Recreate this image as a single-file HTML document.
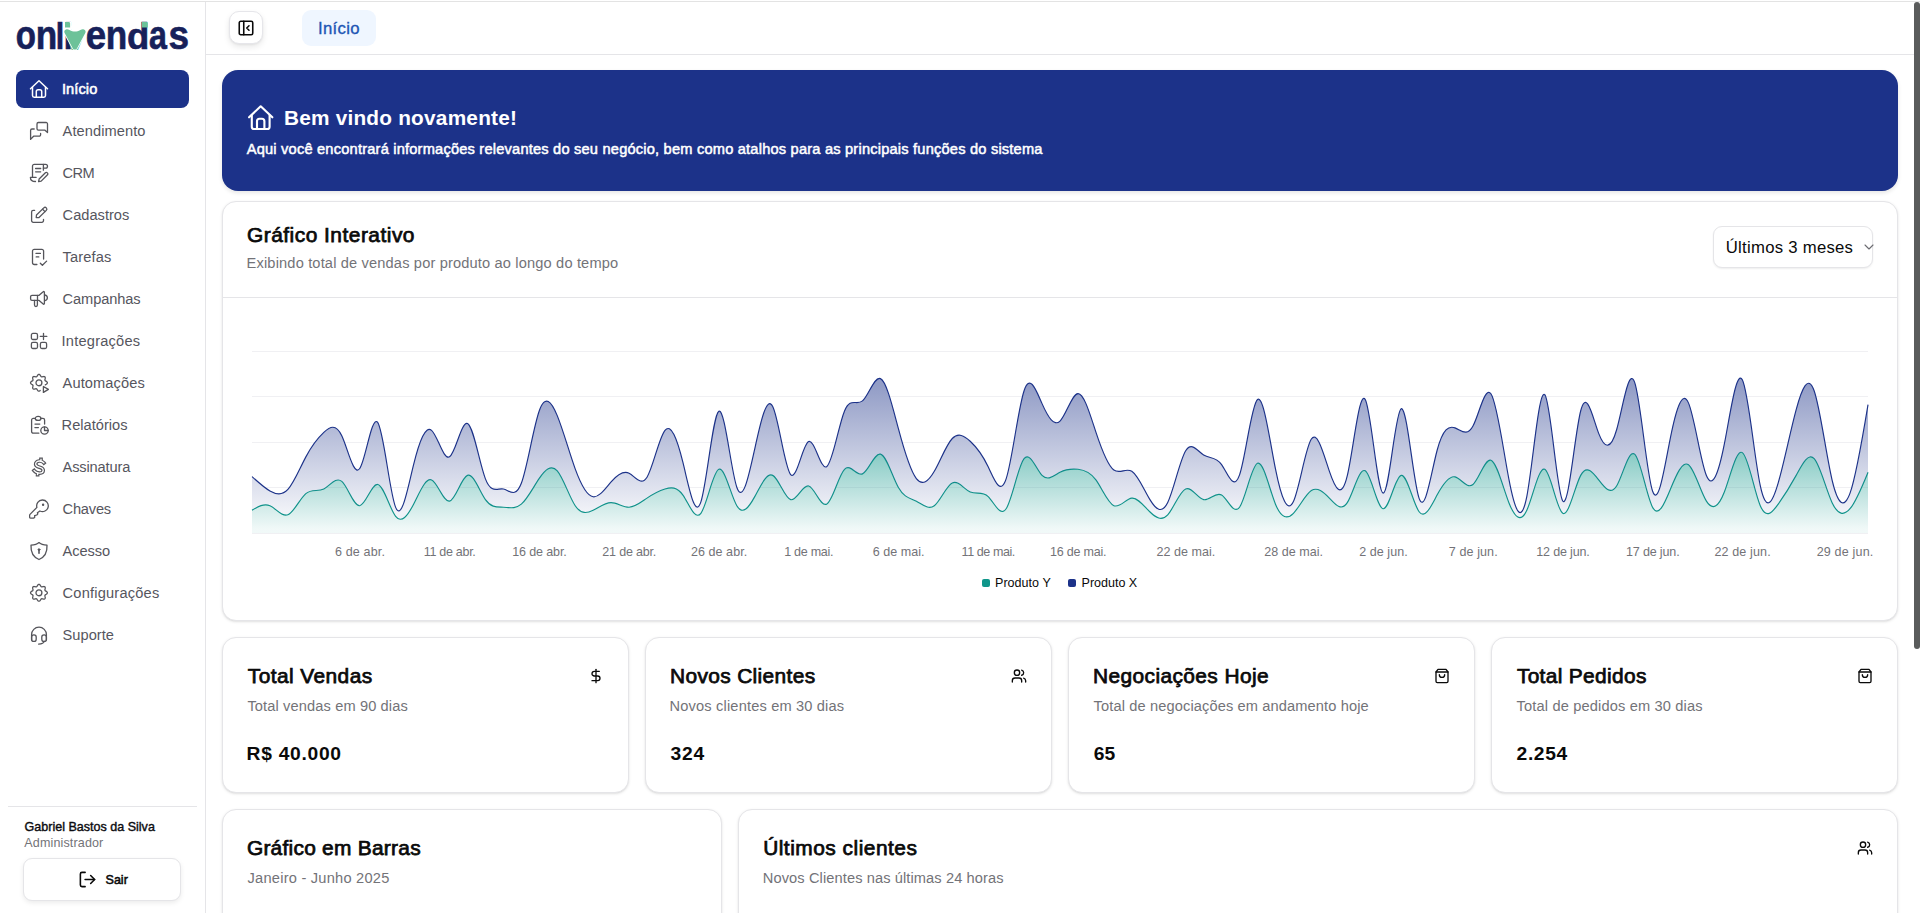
<!DOCTYPE html>
<html lang="pt-BR"><head><meta charset="utf-8"><title>Onlivendas - Início</title>
<style>
*{box-sizing:border-box;margin:0;padding:0}
html,body{width:1920px;height:913px;overflow:hidden;background:#fff}
body{font-family:"Liberation Sans", sans-serif;color:#0a0a0a;position:relative;-webkit-font-smoothing:antialiased}
.abs{position:absolute}
.t{position:absolute;white-space:nowrap;display:block}
.card{position:absolute;background:#fff;border:1px solid #e5e5e8;border-radius:14px;box-shadow:0 1px 3px rgba(0,0,0,.10),0 1px 2px -1px rgba(0,0,0,.10)}
svg{display:block}
</style></head>
<body>
<div class="abs" style="left:0;top:1px;width:1920px;height:1px;background:#e3e3e3"></div>
<div class="abs" style="left:205px;top:2px;width:1px;height:911px;background:#e5e5e8"></div>
<div class="abs" id="logo" style="left:0;top:13.0px;height:42.6px;width:205px;font-size:42.6px;line-height:42.6px;font-weight:700;white-space:nowrap" aria-label="onlivendas"><span style="display:inline-block;width:0;color:#17215a;-webkit-text-stroke:0.7px #17215a;transform-origin:0 36.0px;transform:translate(15.75px,0.46px) scale(0.7753,0.9620)">o</span><span style="display:inline-block;width:0;color:#17215a;-webkit-text-stroke:0.7px #17215a;transform-origin:0 36.0px;transform:translate(35.84px,0.27px) scale(0.8238,0.9451)">n</span><span style="display:inline-block;width:0;color:#17215a;-webkit-text-stroke:0.7px #17215a;transform-origin:0 36.0px;transform:translate(55.72px,0.30px) scale(0.7143,0.8675)">l</span><span style="display:inline-block;width:0;color:#17215a;-webkit-text-stroke:0.7px #17215a;transform-origin:0 36.0px;transform:translate(63.76px,0.30px) scale(0.7532,0.8675)">i</span><span style="display:inline-block;width:0;color:#6cc299;-webkit-text-stroke:0px #6cc299;transform-origin:0 36.0px;transform:translate(64.30px,0.80px) scale(0.8958,0.8261)">v</span><span style="display:inline-block;width:0;color:#17215a;-webkit-text-stroke:0.7px #17215a;transform-origin:0 36.0px;transform:translate(85.84px,0.46px) scale(0.8590,0.9620)">e</span><span style="display:inline-block;width:0;color:#17215a;-webkit-text-stroke:0.7px #17215a;transform-origin:0 36.0px;transform:translate(105.84px,0.27px) scale(0.8238,0.9451)">n</span><span style="display:inline-block;width:0;color:#17215a;-webkit-text-stroke:0.7px #17215a;transform-origin:0 36.0px;transform:translate(126.94px,0.49px) scale(0.8565,0.8738)">d</span><span style="display:inline-block;width:0;color:#17215a;-webkit-text-stroke:0.7px #17215a;transform-origin:0 36.0px;transform:translate(148.91px,0.46px) scale(0.7553,0.9620)">a</span><span style="display:inline-block;width:0;color:#17215a;-webkit-text-stroke:0.7px #17215a;transform-origin:0 36.0px;transform:translate(168.44px,0.46px) scale(0.8664,0.9620)">s</span></div><svg class="abs" style="left:0;top:0" width="205" height="64" viewBox="0 0 205 64">
<rect x="64.4" y="21.4" width="7" height="10.6" fill="#fff"/>
<path d="M65 22.1 H68.8 Q70.1 22.1 70.1 23.4 V27.5 H65 Z" fill="#6cc299"/>
<path d="M64.5 32.8 C63.9 31.4 64.6 29.9 66 29.4 C67.2 29 68.3 29.3 69.5 29.9 C71.5 30.9 73 31.4 74.9 31.4 C76.8 31.4 78.4 30.9 80.4 29.9 C81.6 29.3 82.7 29 83.9 29.4 C85.3 29.9 86 31.4 85.4 32.8 L77.2 47.9 C76.2 49.9 73.6 49.9 72.6 47.9 Z" fill="#6cc299" stroke="#fff" stroke-width="1.6" paint-order="stroke"/>
<path d="M141.9 22.1 H146.4 Q147.8 22.1 147.8 23.5 V27.4 H141.9 Z" fill="#6cc299"/>
</svg>
<div class="abs" style="left:16px;top:70px;width:173px;height:38px;border-radius:8px;background:#1c3289"></div>
<div class="abs" style="left:29px;top:79px;width:20px;height:20px;color:#fff"><svg width="20" height="20" viewBox="0 0 20 20" fill="none" stroke-linecap="round" stroke-linejoin="round" stroke="#fff" stroke-width="1.5"><path d="M1.5 9.7 L10 1.7 L18.5 9.7"/><path d="M3.5 8.2 V16.6 a1.7 1.7 0 0 0 1.7 1.7 H14.8 a1.7 1.7 0 0 0 1.7 -1.7 V8.2"/><path d="M7.3 18.2 V12.6 a1.8 1.8 0 0 1 1.8 -1.8 h1.8 a1.8 1.8 0 0 1 1.8 1.8 V18.2"/></svg></div>
<div class="abs" style="left:29px;top:121px;width:20px;height:20px;color:#55555b"><svg width="20" height="20" viewBox="0 0 20 20" fill="none" stroke-linecap="round" stroke-linejoin="round" stroke="#55555b" stroke-width="1.3"><path d="M9.4 1.5 H17.1 a1.4 1.4 0 0 1 1.4 1.4 V11.6 L15.7 9.1 H9.4 a1.4 1.4 0 0 1 -1.4 -1.4 V2.9 a1.4 1.4 0 0 1 1.4 -1.4 Z"/><path d="M5.2 8 H3 a1.4 1.4 0 0 0 -1.4 1.4 V18.4 L4.6 15.2 H10.2 a1.4 1.4 0 0 0 1.4 -1.4 V12.4"/></svg></div>
<div class="abs" style="left:29px;top:163px;width:20px;height:20px;color:#55555b"><svg width="20" height="20" viewBox="0 0 20 20" fill="none" stroke-linecap="round" stroke-linejoin="round" stroke="#55555b" stroke-width="1.3"><path d="M14.4 7.2 V1.4 H5.2 a1.7 1.7 0 0 0 -1.7 1.7 V14.4"/><path d="M14.4 1.4 H16.6 a1.9 1.9 0 0 1 0 3.8 H14.4"/><path d="M6.6 5.5 H11.7 M6.6 8.8 H11.7"/><path d="M7.1 14.4 H1.4 c0 2.6 1.9 4.1 5.1 4.1"/><path d="M9.6 18.6 l0.5 -2.6 l6.3 -6.3 a1.5 1.5 0 0 1 2.1 2.1 l-6.3 6.3 Z"/></svg></div>
<div class="abs" style="left:29px;top:205px;width:20px;height:20px;color:#55555b"><svg width="20" height="20" viewBox="0 0 20 20" fill="none" stroke-linecap="round" stroke-linejoin="round" stroke="#55555b" stroke-width="1.3"><path d="M5.6 5.4 H4.2 a1.6 1.6 0 0 0 -1.6 1.6 V15.7 a1.6 1.6 0 0 0 1.6 1.6 H12.9 a1.6 1.6 0 0 0 1.6 -1.6 V14.3"/><path d="M7.2 12.6 l0.3 -2.6 l7.3 -7.1 a1.75 1.75 0 0 1 2.5 2.5 l-7.3 7.1 Z"/><path d="M13.6 4.2 L16.0 6.6"/></svg></div>
<div class="abs" style="left:29px;top:247px;width:20px;height:20px;color:#55555b"><svg width="20" height="20" viewBox="0 0 20 20" fill="none" stroke-linecap="round" stroke-linejoin="round" stroke="#55555b" stroke-width="1.3"><path d="M7.9 17.5 H5.2 a1.7 1.7 0 0 1 -1.7 -1.7 V4.1 a1.7 1.7 0 0 1 1.7 -1.7 H12.9 a1.7 1.7 0 0 1 1.7 1.7 V12"/><path d="M7 6.4 H11.4 M7.2 9.95 H9.8"/><path d="M11.3 16.2 L13.4 18.3 L17.6 14.1"/></svg></div>
<div class="abs" style="left:29px;top:289px;width:20px;height:20px;color:#55555b"><svg width="20" height="20" viewBox="0 0 20 20" fill="none" stroke-linecap="round" stroke-linejoin="round" stroke="#55555b" stroke-width="1.3"><path d="M8.5 6.35 H3 a1.4 1.4 0 0 0 -1.4 1.4 V10 a1.4 1.4 0 0 0 1.4 1.4 H8.5 Z"/><path d="M8.5 6.35 H10.1 L14.2 2.7 a0.7 0.7 0 0 1 1.2 0.5 V14.6 a0.7 0.7 0 0 1 -1.2 0.5 L10.1 11.4 H8.5"/><path d="M5.5 11.4 V16.1 a1.45 1.45 0 0 0 2.9 0 V11.4"/><path d="M16 6 a2.9 2.9 0 0 1 0 5.7"/></svg></div>
<div class="abs" style="left:29px;top:331px;width:20px;height:20px;color:#55555b"><svg width="20" height="20" viewBox="0 0 20 20" fill="none" stroke-linecap="round" stroke-linejoin="round" stroke="#55555b" stroke-width="1.3"><rect x="2.4" y="2.4" width="6.1" height="6.1" rx="1.5"/><rect x="2.4" y="11.4" width="6.1" height="6.1" rx="1.5"/><rect x="11.4" y="11.4" width="6.2" height="6.1" rx="1.5"/><path d="M14.5 2.3 V8.6 M11.3 5.45 H17.8"/></svg></div>
<div class="abs" style="left:29px;top:373px;width:20px;height:20px;color:#55555b"><svg width="20" height="20" viewBox="0 0 20 20" fill="none" stroke-linecap="round" stroke-linejoin="round" stroke="#55555b" stroke-width="1.3"><path d="M11.16 17.45 L10.89 17.75 L10.59 17.99 L10.28 18.15 L9.95 18.20 L9.62 18.15 L9.31 17.99 L9.01 17.75 L8.74 17.45 L8.50 17.11 L8.28 16.76 L8.08 16.43 L7.89 16.15 L7.68 15.94 L7.46 15.81 L7.21 15.75 L6.92 15.75 L6.58 15.81 L6.21 15.90 L5.81 15.99 L5.40 16.06 L4.99 16.09 L4.61 16.05 L4.28 15.93 L4.01 15.74 L3.82 15.47 L3.70 15.14 L3.66 14.76 L3.69 14.35 L3.76 13.94 L3.85 13.54 L3.94 13.17 L4.00 12.83 L4.00 12.54 L3.94 12.29 L3.81 12.07 L3.60 11.86 L3.32 11.67 L2.99 11.47 L2.64 11.25 L2.30 11.01 L2.00 10.74 L1.76 10.44 L1.60 10.13 L1.55 9.80 L1.60 9.47 L1.76 9.16 L2.00 8.86 L2.30 8.59 L2.64 8.35 L2.99 8.13 L3.32 7.93 L3.60 7.74 L3.81 7.53 L3.94 7.31 L4.00 7.06 L4.00 6.77 L3.94 6.43 L3.85 6.06 L3.76 5.66 L3.69 5.25 L3.66 4.84 L3.70 4.46 L3.82 4.13 L4.01 3.86 L4.28 3.67 L4.61 3.55 L4.99 3.51 L5.40 3.54 L5.81 3.61 L6.21 3.70 L6.58 3.79 L6.92 3.85 L7.21 3.85 L7.46 3.79 L7.68 3.66 L7.89 3.45 L8.08 3.17 L8.28 2.84 L8.50 2.49 L8.74 2.15 L9.01 1.85 L9.31 1.61 L9.62 1.45 L9.95 1.40 L10.28 1.45 L10.59 1.61 L10.89 1.85 L11.16 2.15 L11.40 2.49 L11.62 2.84 L11.82 3.17 L12.01 3.45 L12.22 3.66 L12.44 3.79 L12.69 3.85 L12.98 3.85 L13.32 3.79 L13.69 3.70 L14.09 3.61 L14.50 3.54 L14.91 3.51 L15.29 3.55 L15.62 3.67 L15.89 3.86 L16.08 4.13 L16.20 4.46 L16.24 4.84 L16.21 5.25 L16.14 5.66 L16.05 6.06 L15.96 6.43 L15.90 6.77 L15.90 7.06 L15.96 7.31 L16.09 7.53 L16.30 7.74 L16.58 7.93 L16.91 8.13 L17.26 8.35 L17.60 8.59 L17.90 8.86 L18.14 9.16 L18.30 9.47 L18.35 9.80 L18.35 9.80 L18.30 10.13 L18.14 10.44 L17.90 10.74 L17.60 11.01 L17.26 11.25 L16.91 11.47 L16.58 11.67 L16.30 11.86"/><circle cx="9.95" cy="9.8" r="2.95"/><path d="M14.4 13.5 V19.4 L19.4 16.4 Z"/></svg></div>
<div class="abs" style="left:29px;top:415px;width:20px;height:20px;color:#55555b"><svg width="20" height="20" viewBox="0 0 20 20" fill="none" stroke-linecap="round" stroke-linejoin="round" stroke="#55555b" stroke-width="1.3"><path d="M9.8 18.2 H4.3 a1.7 1.7 0 0 1 -1.7 -1.7 V5.1 a1.7 1.7 0 0 1 1.7 -1.7 H6.3 M11.9 3.4 H13.9 a1.7 1.7 0 0 1 1.7 1.7 V9.1"/><ellipse cx="9.1" cy="3.4" rx="2.8" ry="2"/><path d="M6 9.1 H10.8 M5.9 12.6 H9.4"/><circle cx="15.5" cy="15.5" r="3.7"/><path d="M15.5 11.8 V15.5 H19.2"/></svg></div>
<div class="abs" style="left:29px;top:457px;width:20px;height:20px;color:#55555b"><svg width="20" height="20" viewBox="0 0 20 20" fill="none" stroke-linecap="round" stroke-linejoin="round" stroke="#55555b" stroke-width="1.3"><path d="M14.9 5.9 C13.6 4.3 11.8 3.9 10.2 4 C7.7 4.2 6.5 5.8 6.7 7.4 C7 9.3 9 9.8 10.5 10.2 C12.3 10.7 14.3 11.6 14.2 13.5 C14.1 15.3 12.4 16.2 10.3 16.1 C8.2 16 6.4 15.3 5.1 13.6 M12 4 V2.3 M8.6 16.2 V17.6" stroke-width="3.7" stroke-linecap="square"/><path d="M14.9 5.9 C13.6 4.3 11.8 3.9 10.2 4 C7.7 4.2 6.5 5.8 6.7 7.4 C7 9.3 9 9.8 10.5 10.2 C12.3 10.7 14.3 11.6 14.2 13.5 C14.1 15.3 12.4 16.2 10.3 16.1 C8.2 16 6.4 15.3 5.1 13.6 M12 4 V2.3 M8.6 16.2 V17.6" stroke="#fff" stroke-width="1.3" stroke-linecap="square"/></svg></div>
<div class="abs" style="left:29px;top:499px;width:20px;height:20px;color:#55555b"><svg width="20" height="20" viewBox="0 0 20 20" fill="none" stroke-linecap="round" stroke-linejoin="round" stroke="#55555b" stroke-width="1.3"><path d="M7.9 8.4 A5.8 5.8 0 1 1 10.9 12 L8.4 13.7 L8.8 14.9 L7.8 16 L5.6 16.7 L5.8 18 L4.8 19.2 H1.8 Q0.6 19.2 0.6 18 V16.4 Q0.6 15.8 1 15.4 Z"/><circle cx="14.1" cy="5.7" r="0.55" fill="currentColor"/></svg></div>
<div class="abs" style="left:29px;top:541px;width:20px;height:20px;color:#55555b"><svg width="20" height="20" viewBox="0 0 20 20" fill="none" stroke-linecap="round" stroke-linejoin="round" stroke="#55555b" stroke-width="1.3"><path d="M10 1.6 C11.5 3 14.5 4 18 4.2 C18.4 11.6 15.2 16.3 10 18.5 C4.8 16.3 1.6 11.6 2 4.2 C5.5 4 8.5 3 10 1.6 Z"/><circle cx="10" cy="8.6" r="0.9" fill="currentColor" stroke-width="1"/><path d="M10 9 V12.2" stroke-width="1.6"/></svg></div>
<div class="abs" style="left:29px;top:583px;width:20px;height:20px;color:#55555b"><svg width="20" height="20" viewBox="0 0 20 20" fill="none" stroke-linecap="round" stroke-linejoin="round" stroke="#55555b" stroke-width="1.3"><path d="M18.35 9.80 L18.30 10.13 L18.14 10.44 L17.90 10.74 L17.60 11.01 L17.26 11.25 L16.91 11.47 L16.58 11.67 L16.30 11.86 L16.09 12.07 L15.96 12.29 L15.90 12.54 L15.90 12.83 L15.96 13.17 L16.05 13.54 L16.14 13.94 L16.21 14.35 L16.24 14.76 L16.20 15.14 L16.08 15.47 L15.89 15.74 L15.62 15.93 L15.29 16.05 L14.91 16.09 L14.50 16.06 L14.09 15.99 L13.69 15.90 L13.32 15.81 L12.98 15.75 L12.69 15.75 L12.44 15.81 L12.22 15.94 L12.01 16.15 L11.82 16.43 L11.62 16.76 L11.40 17.11 L11.16 17.45 L10.89 17.75 L10.59 17.99 L10.28 18.15 L9.95 18.20 L9.62 18.15 L9.31 17.99 L9.01 17.75 L8.74 17.45 L8.50 17.11 L8.28 16.76 L8.08 16.43 L7.89 16.15 L7.68 15.94 L7.46 15.81 L7.21 15.75 L6.92 15.75 L6.58 15.81 L6.21 15.90 L5.81 15.99 L5.40 16.06 L4.99 16.09 L4.61 16.05 L4.28 15.93 L4.01 15.74 L3.82 15.47 L3.70 15.14 L3.66 14.76 L3.69 14.35 L3.76 13.94 L3.85 13.54 L3.94 13.17 L4.00 12.83 L4.00 12.54 L3.94 12.29 L3.81 12.07 L3.60 11.86 L3.32 11.67 L2.99 11.47 L2.64 11.25 L2.30 11.01 L2.00 10.74 L1.76 10.44 L1.60 10.13 L1.55 9.80 L1.60 9.47 L1.76 9.16 L2.00 8.86 L2.30 8.59 L2.64 8.35 L2.99 8.13 L3.32 7.93 L3.60 7.74 L3.81 7.53 L3.94 7.31 L4.00 7.06 L4.00 6.77 L3.94 6.43 L3.85 6.06 L3.76 5.66 L3.69 5.25 L3.66 4.84 L3.70 4.46 L3.82 4.13 L4.01 3.86 L4.28 3.67 L4.61 3.55 L4.99 3.51 L5.40 3.54 L5.81 3.61 L6.21 3.70 L6.58 3.79 L6.92 3.85 L7.21 3.85 L7.46 3.79 L7.68 3.66 L7.89 3.45 L8.08 3.17 L8.28 2.84 L8.50 2.49 L8.74 2.15 L9.01 1.85 L9.31 1.61 L9.62 1.45 L9.95 1.40 L10.28 1.45 L10.59 1.61 L10.89 1.85 L11.16 2.15 L11.40 2.49 L11.62 2.84 L11.82 3.17 L12.01 3.45 L12.22 3.66 L12.44 3.79 L12.69 3.85 L12.98 3.85 L13.32 3.79 L13.69 3.70 L14.09 3.61 L14.50 3.54 L14.91 3.51 L15.29 3.55 L15.62 3.67 L15.89 3.86 L16.08 4.13 L16.20 4.46 L16.24 4.84 L16.21 5.25 L16.14 5.66 L16.05 6.06 L15.96 6.43 L15.90 6.77 L15.90 7.06 L15.96 7.31 L16.09 7.53 L16.30 7.74 L16.58 7.93 L16.91 8.13 L17.26 8.35 L17.60 8.59 L17.90 8.86 L18.14 9.16 L18.30 9.47 L18.35 9.80Z"/><circle cx="9.95" cy="9.8" r="2.95"/></svg></div>
<div class="abs" style="left:29px;top:625px;width:20px;height:20px;color:#55555b"><svg width="20" height="20" viewBox="0 0 20 20" fill="none" stroke-linecap="round" stroke-linejoin="round" stroke="#55555b" stroke-width="1.3"><path d="M2.6 15 V9.6 a7.4 7.4 0 0 1 14.8 0 V15"/><rect x="2.6" y="9.8" width="4.6" height="6.6" rx="2.2"/><rect x="12.8" y="9.8" width="4.6" height="6.6" rx="2.2"/><path d="M15.3 16.4 C14.8 18 12.8 19 9.6 19.1"/></svg></div>
<div class="abs" style="left:8px;top:806px;width:189px;height:1px;background:#e5e5e8"></div>
<div class="abs" style="left:23px;top:858px;width:158px;height:43px;border:1px solid #e5e5e8;border-radius:9px;background:#fff;box-shadow:0 2px 5px rgba(0,0,0,.08)"></div>
<svg class="abs" style="left:77.5px;top:870.3px" width="19" height="19" viewBox="0 0 24 24" fill="none" stroke="#0a0a0a" stroke-width="2" stroke-linecap="round" stroke-linejoin="round"><path d="M9 21H5a2 2 0 0 1-2-2V5a2 2 0 0 1 2-2h4"/><polyline points="16 17 21 12 16 7"/><line x1="21" x2="9" y1="12" y2="12"/></svg>
<div class="abs" style="left:206px;top:54px;width:1708px;height:1px;background:#e5e5e8"></div>
<div class="abs" style="left:229px;top:11px;width:34px;height:33px;border:1px solid #e6e6ea;border-radius:10px;background:#fff;box-shadow:0 3px 6px rgba(0,0,0,.09),0 1px 2px rgba(0,0,0,.05)"></div>
<svg class="abs" style="left:237px;top:18.8px" width="18" height="18" viewBox="0 0 24 24" fill="none" stroke="#0a0a0a" stroke-width="2.1" stroke-linecap="round" stroke-linejoin="round"><rect width="18" height="18" x="3" y="3" rx="2"/><path d="M9 3v18"/><path d="m16 15-3-3 3-3"/></svg>
<div class="abs" style="left:302px;top:10px;width:74px;height:36px;border-radius:9px;background:#eff6ff"></div>
<div class="abs" style="left:222px;top:70px;width:1676px;height:121px;border-radius:16px;background:#1c3289;box-shadow:0 2px 4px rgba(0,0,0,.10)"></div>
<div class="abs" style="left:247.3px;top:104px;width:27.4px;height:27.4px"><svg width="27.4" height="27.4" viewBox="0 0 20 20" fill="none" stroke-linecap="round" stroke-linejoin="round" stroke="#fff" stroke-width="1.55"><path d="M1.5 9.7 L10 1.7 L18.5 9.7"/><path d="M3.5 8.2 V16.6 a1.7 1.7 0 0 0 1.7 1.7 H14.8 a1.7 1.7 0 0 0 1.7 -1.7 V8.2"/><path d="M7.3 18.2 V12.6 a1.8 1.8 0 0 1 1.8 -1.8 h1.8 a1.8 1.8 0 0 1 1.8 1.8 V18.2"/></svg></div>
<div class="card" style="left:222px;top:201px;width:1676px;height:420px"></div>
<div class="abs" style="left:223px;top:297px;width:1674px;height:1px;background:#e5e5e8"></div>
<div class="abs" style="left:1713px;top:226px;width:160px;height:42px;border:1px solid #e5e5e8;border-radius:9px;background:#fff;box-shadow:0 1px 2px rgba(0,0,0,.07)"></div>
<svg class="abs" style="left:1861px;top:239px" width="16" height="16" viewBox="0 0 24 24" fill="none" stroke="#6b6b70" stroke-width="1.6" stroke-linecap="round" stroke-linejoin="round"><path d="m6 9 6 6 6-6"/></svg>
<svg class="abs" style="left:0;top:0" width="1920" height="913" viewBox="0 0 1920 913">
<defs>
<linearGradient id="gx" x1="0" y1="0" x2="0" y2="1"><stop offset="5%" stop-color="#1c3289" stop-opacity="0.8"/><stop offset="95%" stop-color="#1c3289" stop-opacity="0.1"/></linearGradient>
<linearGradient id="gy" x1="0" y1="0" x2="0" y2="1"><stop offset="5%" stop-color="#0f968a" stop-opacity="0.8"/><stop offset="95%" stop-color="#0f968a" stop-opacity="0.1"/></linearGradient>
</defs>
<g shape-rendering="crispEdges"><line x1="252" x2="1868" y1="351.0" y2="351.0" stroke="#f0f0f3" stroke-width="1"/><line x1="252" x2="1868" y1="396.5" y2="396.5" stroke="#f0f0f3" stroke-width="1"/><line x1="252" x2="1868" y1="442.0" y2="442.0" stroke="#f0f0f3" stroke-width="1"/><line x1="252" x2="1868" y1="487.5" y2="487.5" stroke="#f0f0f3" stroke-width="1"/><line x1="252" x2="1868" y1="533.0" y2="533.0" stroke="#f0f0f3" stroke-width="1"/></g>
<path d="M252.00,476.58C257.99,482.03,263.97,487.48,269.96,490.99C275.94,494.50,281.93,496.08,287.91,489.47C293.90,482.86,299.88,468.07,305.87,456.86C311.85,445.66,317.84,438.05,323.82,432.44C329.81,426.84,335.79,423.22,341.78,435.78C347.76,448.34,353.75,477.07,359.73,468.54C365.72,460.01,371.70,414.23,377.69,422.44C383.67,430.64,389.66,492.84,395.64,507.37C401.63,521.89,407.61,488.74,413.60,464.60C419.59,440.46,425.57,425.32,431.56,430.32C437.54,435.32,443.53,460.45,449.51,456.86C455.50,453.27,461.48,420.97,467.47,423.50C473.45,426.03,479.44,463.40,485.42,478.86C491.41,494.31,497.39,487.86,503.38,489.02C509.36,490.18,515.35,498.95,521.33,483.25C527.32,467.56,533.30,427.39,539.29,410.76C545.27,394.13,551.26,401.04,557.24,415.61C563.23,430.18,569.21,452.42,575.20,468.85C581.19,485.27,587.17,495.89,593.16,496.75C599.14,497.61,605.13,488.72,611.11,481.89C617.10,475.06,623.08,470.30,629.07,473.24C635.05,476.18,641.04,486.82,647.02,477.19C653.01,467.55,658.99,437.65,664.98,430.32C670.96,422.99,676.95,438.24,682.93,462.48C688.92,486.71,694.90,519.92,700.89,501.91C706.87,483.90,712.86,414.66,718.84,411.21C724.83,407.76,730.81,470.09,736.80,487.20C742.79,504.30,748.77,476.19,754.76,448.82C760.74,421.46,766.73,394.86,772.71,406.51C778.70,418.16,784.68,468.07,790.67,474.61C796.65,481.14,802.64,444.30,808.62,441.55C814.61,438.79,820.59,470.11,826.58,466.72C832.56,463.33,838.55,425.23,844.53,410.91C850.52,396.59,856.50,406.05,862.49,400.90C868.47,395.75,874.46,375.98,880.44,378.60C886.43,381.22,892.41,406.23,898.40,428.65C904.39,451.08,910.37,470.92,916.36,478.55C922.34,486.19,928.33,481.62,934.31,471.27C940.30,460.93,946.28,444.81,952.27,438.51C958.25,432.21,964.24,435.72,970.22,441.24C976.21,446.76,982.19,454.28,988.18,466.72C994.16,479.16,1000.15,496.52,1006.13,478.86C1012.12,461.19,1018.10,408.49,1024.09,390.74C1030.07,372.98,1036.06,390.16,1042.04,403.63C1048.03,417.10,1054.01,426.86,1060.00,421.07C1065.99,415.28,1071.97,393.93,1077.96,393.62C1083.94,393.31,1089.93,414.03,1095.91,432.14C1101.90,450.25,1107.88,465.74,1113.87,470.06C1119.85,474.37,1125.84,467.51,1131.82,471.27C1137.81,475.03,1143.79,489.42,1149.78,499.33C1155.76,509.24,1161.75,514.68,1167.73,502.51C1173.72,490.35,1179.70,460.58,1185.69,450.80C1191.67,441.02,1197.66,451.22,1203.64,455.04C1209.63,458.86,1215.61,456.29,1221.60,464.60C1227.59,472.90,1233.57,492.08,1239.56,474.91C1245.54,457.74,1251.53,404.21,1257.51,399.53C1263.50,394.85,1269.48,439.01,1275.47,468.85C1281.45,498.68,1287.44,514.18,1293.42,501.45C1299.41,488.73,1305.39,447.77,1311.38,438.97C1317.36,430.16,1323.35,453.51,1329.33,471.12C1335.32,488.73,1341.30,500.59,1347.29,475.67C1353.27,450.75,1359.26,389.05,1365.24,399.53C1371.23,410.01,1377.21,492.68,1383.20,493.11C1389.19,493.55,1395.17,411.76,1401.16,408.78C1407.14,405.81,1413.13,481.65,1419.11,498.42C1425.10,515.19,1431.08,472.89,1437.07,450.49C1443.05,428.10,1449.04,425.61,1455.02,427.89C1461.01,430.18,1466.99,437.24,1472.98,426.07C1478.96,414.91,1484.95,385.51,1490.93,393.77C1496.92,402.03,1502.90,447.93,1508.89,479.16C1514.87,510.38,1520.86,526.93,1526.84,496.30C1532.83,465.66,1538.81,387.85,1544.80,394.68C1550.79,401.51,1556.77,492.98,1562.76,501.00C1568.74,509.02,1574.73,433.58,1580.71,410.76C1586.70,387.93,1592.68,417.71,1598.67,433.36C1604.65,449.00,1610.64,450.50,1616.62,429.72C1622.61,408.93,1628.59,365.87,1634.58,382.09C1640.56,398.32,1646.55,473.83,1652.53,490.99C1658.52,508.15,1664.50,466.95,1670.49,437.30C1676.47,407.64,1682.46,389.53,1688.44,402.87C1694.43,416.21,1700.41,461.00,1706.40,475.52C1712.39,490.03,1718.37,474.27,1724.36,443.97C1730.34,413.68,1736.33,368.85,1742.31,379.82C1748.30,390.78,1754.28,457.54,1760.27,485.68C1766.25,513.82,1772.24,503.35,1778.22,482.80C1784.21,462.25,1790.19,431.62,1796.18,409.54C1802.16,387.47,1808.15,373.95,1814.13,390.74C1820.12,407.53,1826.10,454.63,1832.09,480.07C1838.07,505.51,1844.06,509.29,1850.04,493.11C1856.03,476.94,1862.01,440.81,1868.00,404.69L1868.00,472.33C1862.01,486.99,1856.03,501.64,1850.04,508.73C1844.06,515.83,1838.07,515.36,1832.09,502.67C1826.10,489.97,1820.12,465.05,1814.13,458.68C1808.15,452.31,1802.16,464.49,1796.18,475.37C1790.19,486.24,1784.21,495.81,1778.22,504.18C1772.24,512.56,1766.25,519.74,1760.27,505.70C1754.28,491.66,1748.30,456.39,1742.31,452.62C1736.33,448.84,1730.34,476.56,1724.36,492.05C1718.37,507.54,1712.39,510.79,1706.40,501.15C1700.41,491.51,1694.43,468.99,1688.44,464.75C1682.46,460.51,1676.47,474.57,1670.49,489.02C1664.50,503.47,1658.52,518.31,1652.53,507.22C1646.55,496.12,1640.56,459.08,1634.58,454.13C1628.59,449.19,1622.61,476.33,1616.62,485.98C1610.64,495.63,1604.65,487.78,1598.67,479.92C1592.68,472.05,1586.70,464.17,1580.71,475.37C1574.73,486.56,1568.74,516.82,1562.76,513.28C1556.77,509.75,1550.79,472.41,1544.80,469.30C1538.81,466.19,1532.83,497.32,1526.84,510.25C1520.86,523.18,1514.87,517.91,1508.89,502.67C1502.90,487.42,1496.92,462.19,1490.93,460.20C1484.95,458.21,1478.96,479.46,1472.98,484.47C1466.99,489.48,1461.01,478.25,1455.02,476.88C1449.04,475.52,1443.05,484.01,1437.07,495.08C1431.08,506.16,1425.10,519.81,1419.11,511.77C1413.13,503.72,1407.14,473.97,1401.16,475.37C1395.17,476.76,1389.19,509.29,1383.20,508.73C1377.21,508.18,1371.23,474.53,1365.24,470.82C1359.26,467.11,1353.27,493.33,1347.29,502.67C1341.30,512.00,1335.32,504.45,1329.33,498.12C1323.35,491.79,1317.36,486.69,1311.38,490.53C1305.39,494.38,1299.41,507.18,1293.42,513.28C1287.44,519.39,1281.45,518.81,1275.47,504.18C1269.48,489.56,1263.50,460.89,1257.51,463.23C1251.53,465.57,1245.54,498.92,1239.56,507.22C1233.57,515.51,1227.59,498.75,1221.60,495.08C1215.61,491.42,1209.63,500.85,1203.64,499.63C1197.66,498.42,1191.67,486.56,1185.69,489.02C1179.70,491.47,1173.72,508.23,1167.73,514.80C1161.75,521.37,1155.76,517.74,1149.78,511.77C1143.79,505.80,1137.81,497.48,1131.82,498.12C1125.84,498.75,1119.85,508.34,1113.87,505.70C1107.88,503.06,1101.90,488.20,1095.91,479.92C1089.93,471.63,1083.94,469.93,1077.96,469.30C1071.97,468.67,1065.99,469.13,1060.00,472.33C1054.01,475.54,1048.03,481.48,1042.04,475.37C1036.06,469.25,1030.07,451.06,1024.09,458.68C1018.10,466.30,1012.12,499.72,1006.13,508.73C1000.15,517.74,994.16,502.35,988.18,496.60C982.19,490.85,976.21,494.76,970.22,492.05C964.24,489.34,958.25,480.00,952.27,482.95C946.28,485.90,940.30,501.13,934.31,505.70C928.33,510.27,922.34,504.18,916.36,501.15C910.37,498.12,904.39,498.15,898.40,487.50C892.41,476.85,886.43,455.53,880.44,454.13C874.46,452.73,868.47,471.25,862.49,473.85C856.50,476.45,850.52,463.12,844.53,469.30C838.55,475.48,832.56,501.18,826.58,504.18C820.59,507.19,814.61,487.50,808.62,485.98C802.64,484.47,796.65,501.13,790.67,499.63C784.68,498.13,778.70,478.48,772.71,475.37C766.73,472.26,760.74,485.70,754.76,496.60C748.77,507.50,742.79,515.86,736.80,505.70C730.81,495.54,724.83,466.86,718.84,469.30C712.86,471.74,706.87,505.32,700.89,513.28C694.90,521.25,688.92,503.61,682.93,495.08C676.95,486.56,670.96,487.14,664.98,489.02C658.99,490.90,653.01,494.07,647.02,498.12C641.04,502.16,635.05,507.09,629.07,507.22C623.08,507.35,617.10,502.69,611.11,502.67C605.13,502.64,599.14,507.26,593.16,510.25C587.17,513.24,581.19,514.61,575.20,505.70C569.21,496.79,563.23,477.61,557.24,470.82C551.26,464.03,545.27,469.63,539.29,478.40C533.30,487.17,527.32,499.10,521.33,504.18C515.35,509.27,509.36,507.52,503.38,507.22C497.39,506.92,491.41,508.07,485.42,499.63C479.44,491.20,473.45,473.18,467.47,475.37C461.48,477.55,455.50,499.95,449.51,501.15C443.53,502.35,437.54,482.36,431.56,479.92C425.57,477.47,419.59,492.57,413.60,504.18C407.61,515.79,401.63,523.91,395.64,516.32C389.66,508.72,383.67,485.41,377.69,484.47C371.70,483.52,365.72,504.94,359.73,505.70C353.75,506.46,347.76,486.55,341.78,481.43C335.79,476.31,329.81,485.97,323.82,489.02C317.84,492.06,311.85,488.49,305.87,493.57C299.88,498.65,293.90,512.38,287.91,514.80C281.93,517.22,275.94,508.34,269.96,505.70C263.97,503.06,257.99,506.65,252.00,510.25Z" fill="#fff"/>
<path d="M252.00,510.25C257.99,506.65,263.97,503.06,269.96,505.70C275.94,508.34,281.93,517.22,287.91,514.80C293.90,512.38,299.88,498.65,305.87,493.57C311.85,488.49,317.84,492.06,323.82,489.02C329.81,485.97,335.79,476.31,341.78,481.43C347.76,486.55,353.75,506.46,359.73,505.70C365.72,504.94,371.70,483.52,377.69,484.47C383.67,485.41,389.66,508.72,395.64,516.32C401.63,523.91,407.61,515.79,413.60,504.18C419.59,492.57,425.57,477.47,431.56,479.92C437.54,482.36,443.53,502.35,449.51,501.15C455.50,499.95,461.48,477.55,467.47,475.37C473.45,473.18,479.44,491.20,485.42,499.63C491.41,508.07,497.39,506.92,503.38,507.22C509.36,507.52,515.35,509.27,521.33,504.18C527.32,499.10,533.30,487.17,539.29,478.40C545.27,469.63,551.26,464.03,557.24,470.82C563.23,477.61,569.21,496.79,575.20,505.70C581.19,514.61,587.17,513.24,593.16,510.25C599.14,507.26,605.13,502.64,611.11,502.67C617.10,502.69,623.08,507.35,629.07,507.22C635.05,507.09,641.04,502.16,647.02,498.12C653.01,494.07,658.99,490.90,664.98,489.02C670.96,487.14,676.95,486.56,682.93,495.08C688.92,503.61,694.90,521.25,700.89,513.28C706.87,505.32,712.86,471.74,718.84,469.30C724.83,466.86,730.81,495.54,736.80,505.70C742.79,515.86,748.77,507.50,754.76,496.60C760.74,485.70,766.73,472.26,772.71,475.37C778.70,478.48,784.68,498.13,790.67,499.63C796.65,501.13,802.64,484.47,808.62,485.98C814.61,487.50,820.59,507.19,826.58,504.18C832.56,501.18,838.55,475.48,844.53,469.30C850.52,463.12,856.50,476.45,862.49,473.85C868.47,471.25,874.46,452.73,880.44,454.13C886.43,455.53,892.41,476.85,898.40,487.50C904.39,498.15,910.37,498.12,916.36,501.15C922.34,504.18,928.33,510.27,934.31,505.70C940.30,501.13,946.28,485.90,952.27,482.95C958.25,480.00,964.24,489.34,970.22,492.05C976.21,494.76,982.19,490.85,988.18,496.60C994.16,502.35,1000.15,517.74,1006.13,508.73C1012.12,499.72,1018.10,466.30,1024.09,458.68C1030.07,451.06,1036.06,469.25,1042.04,475.37C1048.03,481.48,1054.01,475.54,1060.00,472.33C1065.99,469.13,1071.97,468.67,1077.96,469.30C1083.94,469.93,1089.93,471.63,1095.91,479.92C1101.90,488.20,1107.88,503.06,1113.87,505.70C1119.85,508.34,1125.84,498.75,1131.82,498.12C1137.81,497.48,1143.79,505.80,1149.78,511.77C1155.76,517.74,1161.75,521.37,1167.73,514.80C1173.72,508.23,1179.70,491.47,1185.69,489.02C1191.67,486.56,1197.66,498.42,1203.64,499.63C1209.63,500.85,1215.61,491.42,1221.60,495.08C1227.59,498.75,1233.57,515.51,1239.56,507.22C1245.54,498.92,1251.53,465.57,1257.51,463.23C1263.50,460.89,1269.48,489.56,1275.47,504.18C1281.45,518.81,1287.44,519.39,1293.42,513.28C1299.41,507.18,1305.39,494.38,1311.38,490.53C1317.36,486.69,1323.35,491.79,1329.33,498.12C1335.32,504.45,1341.30,512.00,1347.29,502.67C1353.27,493.33,1359.26,467.11,1365.24,470.82C1371.23,474.53,1377.21,508.18,1383.20,508.73C1389.19,509.29,1395.17,476.76,1401.16,475.37C1407.14,473.97,1413.13,503.72,1419.11,511.77C1425.10,519.81,1431.08,506.16,1437.07,495.08C1443.05,484.01,1449.04,475.52,1455.02,476.88C1461.01,478.25,1466.99,489.48,1472.98,484.47C1478.96,479.46,1484.95,458.21,1490.93,460.20C1496.92,462.19,1502.90,487.42,1508.89,502.67C1514.87,517.91,1520.86,523.18,1526.84,510.25C1532.83,497.32,1538.81,466.19,1544.80,469.30C1550.79,472.41,1556.77,509.75,1562.76,513.28C1568.74,516.82,1574.73,486.56,1580.71,475.37C1586.70,464.17,1592.68,472.05,1598.67,479.92C1604.65,487.78,1610.64,495.63,1616.62,485.98C1622.61,476.33,1628.59,449.19,1634.58,454.13C1640.56,459.08,1646.55,496.12,1652.53,507.22C1658.52,518.31,1664.50,503.47,1670.49,489.02C1676.47,474.57,1682.46,460.51,1688.44,464.75C1694.43,468.99,1700.41,491.51,1706.40,501.15C1712.39,510.79,1718.37,507.54,1724.36,492.05C1730.34,476.56,1736.33,448.84,1742.31,452.62C1748.30,456.39,1754.28,491.66,1760.27,505.70C1766.25,519.74,1772.24,512.56,1778.22,504.18C1784.21,495.81,1790.19,486.24,1796.18,475.37C1802.16,464.49,1808.15,452.31,1814.13,458.68C1820.12,465.05,1826.10,489.97,1832.09,502.67C1838.07,515.36,1844.06,515.83,1850.04,508.73C1856.03,501.64,1862.01,486.99,1868.00,472.33L1868.00,533.00L252.00,533.00Z" fill="url(#gy)" fill-opacity="0.6"/>
<path d="M252.00,510.25C257.99,506.65,263.97,503.06,269.96,505.70C275.94,508.34,281.93,517.22,287.91,514.80C293.90,512.38,299.88,498.65,305.87,493.57C311.85,488.49,317.84,492.06,323.82,489.02C329.81,485.97,335.79,476.31,341.78,481.43C347.76,486.55,353.75,506.46,359.73,505.70C365.72,504.94,371.70,483.52,377.69,484.47C383.67,485.41,389.66,508.72,395.64,516.32C401.63,523.91,407.61,515.79,413.60,504.18C419.59,492.57,425.57,477.47,431.56,479.92C437.54,482.36,443.53,502.35,449.51,501.15C455.50,499.95,461.48,477.55,467.47,475.37C473.45,473.18,479.44,491.20,485.42,499.63C491.41,508.07,497.39,506.92,503.38,507.22C509.36,507.52,515.35,509.27,521.33,504.18C527.32,499.10,533.30,487.17,539.29,478.40C545.27,469.63,551.26,464.03,557.24,470.82C563.23,477.61,569.21,496.79,575.20,505.70C581.19,514.61,587.17,513.24,593.16,510.25C599.14,507.26,605.13,502.64,611.11,502.67C617.10,502.69,623.08,507.35,629.07,507.22C635.05,507.09,641.04,502.16,647.02,498.12C653.01,494.07,658.99,490.90,664.98,489.02C670.96,487.14,676.95,486.56,682.93,495.08C688.92,503.61,694.90,521.25,700.89,513.28C706.87,505.32,712.86,471.74,718.84,469.30C724.83,466.86,730.81,495.54,736.80,505.70C742.79,515.86,748.77,507.50,754.76,496.60C760.74,485.70,766.73,472.26,772.71,475.37C778.70,478.48,784.68,498.13,790.67,499.63C796.65,501.13,802.64,484.47,808.62,485.98C814.61,487.50,820.59,507.19,826.58,504.18C832.56,501.18,838.55,475.48,844.53,469.30C850.52,463.12,856.50,476.45,862.49,473.85C868.47,471.25,874.46,452.73,880.44,454.13C886.43,455.53,892.41,476.85,898.40,487.50C904.39,498.15,910.37,498.12,916.36,501.15C922.34,504.18,928.33,510.27,934.31,505.70C940.30,501.13,946.28,485.90,952.27,482.95C958.25,480.00,964.24,489.34,970.22,492.05C976.21,494.76,982.19,490.85,988.18,496.60C994.16,502.35,1000.15,517.74,1006.13,508.73C1012.12,499.72,1018.10,466.30,1024.09,458.68C1030.07,451.06,1036.06,469.25,1042.04,475.37C1048.03,481.48,1054.01,475.54,1060.00,472.33C1065.99,469.13,1071.97,468.67,1077.96,469.30C1083.94,469.93,1089.93,471.63,1095.91,479.92C1101.90,488.20,1107.88,503.06,1113.87,505.70C1119.85,508.34,1125.84,498.75,1131.82,498.12C1137.81,497.48,1143.79,505.80,1149.78,511.77C1155.76,517.74,1161.75,521.37,1167.73,514.80C1173.72,508.23,1179.70,491.47,1185.69,489.02C1191.67,486.56,1197.66,498.42,1203.64,499.63C1209.63,500.85,1215.61,491.42,1221.60,495.08C1227.59,498.75,1233.57,515.51,1239.56,507.22C1245.54,498.92,1251.53,465.57,1257.51,463.23C1263.50,460.89,1269.48,489.56,1275.47,504.18C1281.45,518.81,1287.44,519.39,1293.42,513.28C1299.41,507.18,1305.39,494.38,1311.38,490.53C1317.36,486.69,1323.35,491.79,1329.33,498.12C1335.32,504.45,1341.30,512.00,1347.29,502.67C1353.27,493.33,1359.26,467.11,1365.24,470.82C1371.23,474.53,1377.21,508.18,1383.20,508.73C1389.19,509.29,1395.17,476.76,1401.16,475.37C1407.14,473.97,1413.13,503.72,1419.11,511.77C1425.10,519.81,1431.08,506.16,1437.07,495.08C1443.05,484.01,1449.04,475.52,1455.02,476.88C1461.01,478.25,1466.99,489.48,1472.98,484.47C1478.96,479.46,1484.95,458.21,1490.93,460.20C1496.92,462.19,1502.90,487.42,1508.89,502.67C1514.87,517.91,1520.86,523.18,1526.84,510.25C1532.83,497.32,1538.81,466.19,1544.80,469.30C1550.79,472.41,1556.77,509.75,1562.76,513.28C1568.74,516.82,1574.73,486.56,1580.71,475.37C1586.70,464.17,1592.68,472.05,1598.67,479.92C1604.65,487.78,1610.64,495.63,1616.62,485.98C1622.61,476.33,1628.59,449.19,1634.58,454.13C1640.56,459.08,1646.55,496.12,1652.53,507.22C1658.52,518.31,1664.50,503.47,1670.49,489.02C1676.47,474.57,1682.46,460.51,1688.44,464.75C1694.43,468.99,1700.41,491.51,1706.40,501.15C1712.39,510.79,1718.37,507.54,1724.36,492.05C1730.34,476.56,1736.33,448.84,1742.31,452.62C1748.30,456.39,1754.28,491.66,1760.27,505.70C1766.25,519.74,1772.24,512.56,1778.22,504.18C1784.21,495.81,1790.19,486.24,1796.18,475.37C1802.16,464.49,1808.15,452.31,1814.13,458.68C1820.12,465.05,1826.10,489.97,1832.09,502.67C1838.07,515.36,1844.06,515.83,1850.04,508.73C1856.03,501.64,1862.01,486.99,1868.00,472.33" fill="none" stroke="#0f968a" stroke-width="1.15"/>
<path d="M252.00,476.58C257.99,482.03,263.97,487.48,269.96,490.99C275.94,494.50,281.93,496.08,287.91,489.47C293.90,482.86,299.88,468.07,305.87,456.86C311.85,445.66,317.84,438.05,323.82,432.44C329.81,426.84,335.79,423.22,341.78,435.78C347.76,448.34,353.75,477.07,359.73,468.54C365.72,460.01,371.70,414.23,377.69,422.44C383.67,430.64,389.66,492.84,395.64,507.37C401.63,521.89,407.61,488.74,413.60,464.60C419.59,440.46,425.57,425.32,431.56,430.32C437.54,435.32,443.53,460.45,449.51,456.86C455.50,453.27,461.48,420.97,467.47,423.50C473.45,426.03,479.44,463.40,485.42,478.86C491.41,494.31,497.39,487.86,503.38,489.02C509.36,490.18,515.35,498.95,521.33,483.25C527.32,467.56,533.30,427.39,539.29,410.76C545.27,394.13,551.26,401.04,557.24,415.61C563.23,430.18,569.21,452.42,575.20,468.85C581.19,485.27,587.17,495.89,593.16,496.75C599.14,497.61,605.13,488.72,611.11,481.89C617.10,475.06,623.08,470.30,629.07,473.24C635.05,476.18,641.04,486.82,647.02,477.19C653.01,467.55,658.99,437.65,664.98,430.32C670.96,422.99,676.95,438.24,682.93,462.48C688.92,486.71,694.90,519.92,700.89,501.91C706.87,483.90,712.86,414.66,718.84,411.21C724.83,407.76,730.81,470.09,736.80,487.20C742.79,504.30,748.77,476.19,754.76,448.82C760.74,421.46,766.73,394.86,772.71,406.51C778.70,418.16,784.68,468.07,790.67,474.61C796.65,481.14,802.64,444.30,808.62,441.55C814.61,438.79,820.59,470.11,826.58,466.72C832.56,463.33,838.55,425.23,844.53,410.91C850.52,396.59,856.50,406.05,862.49,400.90C868.47,395.75,874.46,375.98,880.44,378.60C886.43,381.22,892.41,406.23,898.40,428.65C904.39,451.08,910.37,470.92,916.36,478.55C922.34,486.19,928.33,481.62,934.31,471.27C940.30,460.93,946.28,444.81,952.27,438.51C958.25,432.21,964.24,435.72,970.22,441.24C976.21,446.76,982.19,454.28,988.18,466.72C994.16,479.16,1000.15,496.52,1006.13,478.86C1012.12,461.19,1018.10,408.49,1024.09,390.74C1030.07,372.98,1036.06,390.16,1042.04,403.63C1048.03,417.10,1054.01,426.86,1060.00,421.07C1065.99,415.28,1071.97,393.93,1077.96,393.62C1083.94,393.31,1089.93,414.03,1095.91,432.14C1101.90,450.25,1107.88,465.74,1113.87,470.06C1119.85,474.37,1125.84,467.51,1131.82,471.27C1137.81,475.03,1143.79,489.42,1149.78,499.33C1155.76,509.24,1161.75,514.68,1167.73,502.51C1173.72,490.35,1179.70,460.58,1185.69,450.80C1191.67,441.02,1197.66,451.22,1203.64,455.04C1209.63,458.86,1215.61,456.29,1221.60,464.60C1227.59,472.90,1233.57,492.08,1239.56,474.91C1245.54,457.74,1251.53,404.21,1257.51,399.53C1263.50,394.85,1269.48,439.01,1275.47,468.85C1281.45,498.68,1287.44,514.18,1293.42,501.45C1299.41,488.73,1305.39,447.77,1311.38,438.97C1317.36,430.16,1323.35,453.51,1329.33,471.12C1335.32,488.73,1341.30,500.59,1347.29,475.67C1353.27,450.75,1359.26,389.05,1365.24,399.53C1371.23,410.01,1377.21,492.68,1383.20,493.11C1389.19,493.55,1395.17,411.76,1401.16,408.78C1407.14,405.81,1413.13,481.65,1419.11,498.42C1425.10,515.19,1431.08,472.89,1437.07,450.49C1443.05,428.10,1449.04,425.61,1455.02,427.89C1461.01,430.18,1466.99,437.24,1472.98,426.07C1478.96,414.91,1484.95,385.51,1490.93,393.77C1496.92,402.03,1502.90,447.93,1508.89,479.16C1514.87,510.38,1520.86,526.93,1526.84,496.30C1532.83,465.66,1538.81,387.85,1544.80,394.68C1550.79,401.51,1556.77,492.98,1562.76,501.00C1568.74,509.02,1574.73,433.58,1580.71,410.76C1586.70,387.93,1592.68,417.71,1598.67,433.36C1604.65,449.00,1610.64,450.50,1616.62,429.72C1622.61,408.93,1628.59,365.87,1634.58,382.09C1640.56,398.32,1646.55,473.83,1652.53,490.99C1658.52,508.15,1664.50,466.95,1670.49,437.30C1676.47,407.64,1682.46,389.53,1688.44,402.87C1694.43,416.21,1700.41,461.00,1706.40,475.52C1712.39,490.03,1718.37,474.27,1724.36,443.97C1730.34,413.68,1736.33,368.85,1742.31,379.82C1748.30,390.78,1754.28,457.54,1760.27,485.68C1766.25,513.82,1772.24,503.35,1778.22,482.80C1784.21,462.25,1790.19,431.62,1796.18,409.54C1802.16,387.47,1808.15,373.95,1814.13,390.74C1820.12,407.53,1826.10,454.63,1832.09,480.07C1838.07,505.51,1844.06,509.29,1850.04,493.11C1856.03,476.94,1862.01,440.81,1868.00,404.69L1868.00,472.33C1862.01,486.99,1856.03,501.64,1850.04,508.73C1844.06,515.83,1838.07,515.36,1832.09,502.67C1826.10,489.97,1820.12,465.05,1814.13,458.68C1808.15,452.31,1802.16,464.49,1796.18,475.37C1790.19,486.24,1784.21,495.81,1778.22,504.18C1772.24,512.56,1766.25,519.74,1760.27,505.70C1754.28,491.66,1748.30,456.39,1742.31,452.62C1736.33,448.84,1730.34,476.56,1724.36,492.05C1718.37,507.54,1712.39,510.79,1706.40,501.15C1700.41,491.51,1694.43,468.99,1688.44,464.75C1682.46,460.51,1676.47,474.57,1670.49,489.02C1664.50,503.47,1658.52,518.31,1652.53,507.22C1646.55,496.12,1640.56,459.08,1634.58,454.13C1628.59,449.19,1622.61,476.33,1616.62,485.98C1610.64,495.63,1604.65,487.78,1598.67,479.92C1592.68,472.05,1586.70,464.17,1580.71,475.37C1574.73,486.56,1568.74,516.82,1562.76,513.28C1556.77,509.75,1550.79,472.41,1544.80,469.30C1538.81,466.19,1532.83,497.32,1526.84,510.25C1520.86,523.18,1514.87,517.91,1508.89,502.67C1502.90,487.42,1496.92,462.19,1490.93,460.20C1484.95,458.21,1478.96,479.46,1472.98,484.47C1466.99,489.48,1461.01,478.25,1455.02,476.88C1449.04,475.52,1443.05,484.01,1437.07,495.08C1431.08,506.16,1425.10,519.81,1419.11,511.77C1413.13,503.72,1407.14,473.97,1401.16,475.37C1395.17,476.76,1389.19,509.29,1383.20,508.73C1377.21,508.18,1371.23,474.53,1365.24,470.82C1359.26,467.11,1353.27,493.33,1347.29,502.67C1341.30,512.00,1335.32,504.45,1329.33,498.12C1323.35,491.79,1317.36,486.69,1311.38,490.53C1305.39,494.38,1299.41,507.18,1293.42,513.28C1287.44,519.39,1281.45,518.81,1275.47,504.18C1269.48,489.56,1263.50,460.89,1257.51,463.23C1251.53,465.57,1245.54,498.92,1239.56,507.22C1233.57,515.51,1227.59,498.75,1221.60,495.08C1215.61,491.42,1209.63,500.85,1203.64,499.63C1197.66,498.42,1191.67,486.56,1185.69,489.02C1179.70,491.47,1173.72,508.23,1167.73,514.80C1161.75,521.37,1155.76,517.74,1149.78,511.77C1143.79,505.80,1137.81,497.48,1131.82,498.12C1125.84,498.75,1119.85,508.34,1113.87,505.70C1107.88,503.06,1101.90,488.20,1095.91,479.92C1089.93,471.63,1083.94,469.93,1077.96,469.30C1071.97,468.67,1065.99,469.13,1060.00,472.33C1054.01,475.54,1048.03,481.48,1042.04,475.37C1036.06,469.25,1030.07,451.06,1024.09,458.68C1018.10,466.30,1012.12,499.72,1006.13,508.73C1000.15,517.74,994.16,502.35,988.18,496.60C982.19,490.85,976.21,494.76,970.22,492.05C964.24,489.34,958.25,480.00,952.27,482.95C946.28,485.90,940.30,501.13,934.31,505.70C928.33,510.27,922.34,504.18,916.36,501.15C910.37,498.12,904.39,498.15,898.40,487.50C892.41,476.85,886.43,455.53,880.44,454.13C874.46,452.73,868.47,471.25,862.49,473.85C856.50,476.45,850.52,463.12,844.53,469.30C838.55,475.48,832.56,501.18,826.58,504.18C820.59,507.19,814.61,487.50,808.62,485.98C802.64,484.47,796.65,501.13,790.67,499.63C784.68,498.13,778.70,478.48,772.71,475.37C766.73,472.26,760.74,485.70,754.76,496.60C748.77,507.50,742.79,515.86,736.80,505.70C730.81,495.54,724.83,466.86,718.84,469.30C712.86,471.74,706.87,505.32,700.89,513.28C694.90,521.25,688.92,503.61,682.93,495.08C676.95,486.56,670.96,487.14,664.98,489.02C658.99,490.90,653.01,494.07,647.02,498.12C641.04,502.16,635.05,507.09,629.07,507.22C623.08,507.35,617.10,502.69,611.11,502.67C605.13,502.64,599.14,507.26,593.16,510.25C587.17,513.24,581.19,514.61,575.20,505.70C569.21,496.79,563.23,477.61,557.24,470.82C551.26,464.03,545.27,469.63,539.29,478.40C533.30,487.17,527.32,499.10,521.33,504.18C515.35,509.27,509.36,507.52,503.38,507.22C497.39,506.92,491.41,508.07,485.42,499.63C479.44,491.20,473.45,473.18,467.47,475.37C461.48,477.55,455.50,499.95,449.51,501.15C443.53,502.35,437.54,482.36,431.56,479.92C425.57,477.47,419.59,492.57,413.60,504.18C407.61,515.79,401.63,523.91,395.64,516.32C389.66,508.72,383.67,485.41,377.69,484.47C371.70,483.52,365.72,504.94,359.73,505.70C353.75,506.46,347.76,486.55,341.78,481.43C335.79,476.31,329.81,485.97,323.82,489.02C317.84,492.06,311.85,488.49,305.87,493.57C299.88,498.65,293.90,512.38,287.91,514.80C281.93,517.22,275.94,508.34,269.96,505.70C263.97,503.06,257.99,506.65,252.00,510.25Z" fill="url(#gx)" fill-opacity="0.6"/>
<path d="M252.00,476.58C257.99,482.03,263.97,487.48,269.96,490.99C275.94,494.50,281.93,496.08,287.91,489.47C293.90,482.86,299.88,468.07,305.87,456.86C311.85,445.66,317.84,438.05,323.82,432.44C329.81,426.84,335.79,423.22,341.78,435.78C347.76,448.34,353.75,477.07,359.73,468.54C365.72,460.01,371.70,414.23,377.69,422.44C383.67,430.64,389.66,492.84,395.64,507.37C401.63,521.89,407.61,488.74,413.60,464.60C419.59,440.46,425.57,425.32,431.56,430.32C437.54,435.32,443.53,460.45,449.51,456.86C455.50,453.27,461.48,420.97,467.47,423.50C473.45,426.03,479.44,463.40,485.42,478.86C491.41,494.31,497.39,487.86,503.38,489.02C509.36,490.18,515.35,498.95,521.33,483.25C527.32,467.56,533.30,427.39,539.29,410.76C545.27,394.13,551.26,401.04,557.24,415.61C563.23,430.18,569.21,452.42,575.20,468.85C581.19,485.27,587.17,495.89,593.16,496.75C599.14,497.61,605.13,488.72,611.11,481.89C617.10,475.06,623.08,470.30,629.07,473.24C635.05,476.18,641.04,486.82,647.02,477.19C653.01,467.55,658.99,437.65,664.98,430.32C670.96,422.99,676.95,438.24,682.93,462.48C688.92,486.71,694.90,519.92,700.89,501.91C706.87,483.90,712.86,414.66,718.84,411.21C724.83,407.76,730.81,470.09,736.80,487.20C742.79,504.30,748.77,476.19,754.76,448.82C760.74,421.46,766.73,394.86,772.71,406.51C778.70,418.16,784.68,468.07,790.67,474.61C796.65,481.14,802.64,444.30,808.62,441.55C814.61,438.79,820.59,470.11,826.58,466.72C832.56,463.33,838.55,425.23,844.53,410.91C850.52,396.59,856.50,406.05,862.49,400.90C868.47,395.75,874.46,375.98,880.44,378.60C886.43,381.22,892.41,406.23,898.40,428.65C904.39,451.08,910.37,470.92,916.36,478.55C922.34,486.19,928.33,481.62,934.31,471.27C940.30,460.93,946.28,444.81,952.27,438.51C958.25,432.21,964.24,435.72,970.22,441.24C976.21,446.76,982.19,454.28,988.18,466.72C994.16,479.16,1000.15,496.52,1006.13,478.86C1012.12,461.19,1018.10,408.49,1024.09,390.74C1030.07,372.98,1036.06,390.16,1042.04,403.63C1048.03,417.10,1054.01,426.86,1060.00,421.07C1065.99,415.28,1071.97,393.93,1077.96,393.62C1083.94,393.31,1089.93,414.03,1095.91,432.14C1101.90,450.25,1107.88,465.74,1113.87,470.06C1119.85,474.37,1125.84,467.51,1131.82,471.27C1137.81,475.03,1143.79,489.42,1149.78,499.33C1155.76,509.24,1161.75,514.68,1167.73,502.51C1173.72,490.35,1179.70,460.58,1185.69,450.80C1191.67,441.02,1197.66,451.22,1203.64,455.04C1209.63,458.86,1215.61,456.29,1221.60,464.60C1227.59,472.90,1233.57,492.08,1239.56,474.91C1245.54,457.74,1251.53,404.21,1257.51,399.53C1263.50,394.85,1269.48,439.01,1275.47,468.85C1281.45,498.68,1287.44,514.18,1293.42,501.45C1299.41,488.73,1305.39,447.77,1311.38,438.97C1317.36,430.16,1323.35,453.51,1329.33,471.12C1335.32,488.73,1341.30,500.59,1347.29,475.67C1353.27,450.75,1359.26,389.05,1365.24,399.53C1371.23,410.01,1377.21,492.68,1383.20,493.11C1389.19,493.55,1395.17,411.76,1401.16,408.78C1407.14,405.81,1413.13,481.65,1419.11,498.42C1425.10,515.19,1431.08,472.89,1437.07,450.49C1443.05,428.10,1449.04,425.61,1455.02,427.89C1461.01,430.18,1466.99,437.24,1472.98,426.07C1478.96,414.91,1484.95,385.51,1490.93,393.77C1496.92,402.03,1502.90,447.93,1508.89,479.16C1514.87,510.38,1520.86,526.93,1526.84,496.30C1532.83,465.66,1538.81,387.85,1544.80,394.68C1550.79,401.51,1556.77,492.98,1562.76,501.00C1568.74,509.02,1574.73,433.58,1580.71,410.76C1586.70,387.93,1592.68,417.71,1598.67,433.36C1604.65,449.00,1610.64,450.50,1616.62,429.72C1622.61,408.93,1628.59,365.87,1634.58,382.09C1640.56,398.32,1646.55,473.83,1652.53,490.99C1658.52,508.15,1664.50,466.95,1670.49,437.30C1676.47,407.64,1682.46,389.53,1688.44,402.87C1694.43,416.21,1700.41,461.00,1706.40,475.52C1712.39,490.03,1718.37,474.27,1724.36,443.97C1730.34,413.68,1736.33,368.85,1742.31,379.82C1748.30,390.78,1754.28,457.54,1760.27,485.68C1766.25,513.82,1772.24,503.35,1778.22,482.80C1784.21,462.25,1790.19,431.62,1796.18,409.54C1802.16,387.47,1808.15,373.95,1814.13,390.74C1820.12,407.53,1826.10,454.63,1832.09,480.07C1838.07,505.51,1844.06,509.29,1850.04,493.11C1856.03,476.94,1862.01,440.81,1868.00,404.69" fill="none" stroke="#1c3289" stroke-width="1.15"/>
<g font-family='"Liberation Sans", sans-serif' font-size="12.4" fill="#737378"></g>
<rect x="982" y="579" width="8" height="8" rx="2" fill="#0f968a"/>
<rect x="1068" y="579" width="8" height="8" rx="2" fill="#1c3289"/>
</svg>
<div class="card" style="left:222px;top:637px;width:407px;height:156px"></div>
<div class="card" style="left:645px;top:637px;width:407px;height:156px"></div>
<div class="card" style="left:1068px;top:637px;width:407px;height:156px"></div>
<div class="card" style="left:1491px;top:637px;width:407px;height:156px"></div>
<svg class="abs" style="left:588px;top:668px" width="16" height="16" viewBox="0 0 24 24" fill="none" stroke="#0a0a0a" stroke-width="2" stroke-linecap="round" stroke-linejoin="round"><line x1="12" x2="12" y1="2" y2="22"/><path d="M17 5H9.5a3.5 3.5 0 0 0 0 7h5a3.5 3.5 0 0 1 0 7H6"/></svg>
<svg class="abs" style="left:1011px;top:668px" width="16" height="16" viewBox="0 0 24 24" fill="none" stroke="#0a0a0a" stroke-width="2" stroke-linecap="round" stroke-linejoin="round"><path d="M16 21v-2a4 4 0 0 0-4-4H6a4 4 0 0 0-4 4v2"/><circle cx="9" cy="7" r="4"/><path d="M22 21v-2a4 4 0 0 0-3-3.87"/><path d="M16 3.13a4 4 0 0 1 0 7.75"/></svg>
<svg class="abs" style="left:1434px;top:668px" width="16" height="16" viewBox="0 0 24 24" fill="none" stroke="#0a0a0a" stroke-width="2" stroke-linecap="round" stroke-linejoin="round"><path d="M6 2 3 6v14a2 2 0 0 0 2 2h14a2 2 0 0 0 2-2V6l-3-4Z"/><path d="M3 6h18"/><path d="M16 10a4 4 0 0 1-8 0"/></svg>
<svg class="abs" style="left:1857px;top:668px" width="16" height="16" viewBox="0 0 24 24" fill="none" stroke="#0a0a0a" stroke-width="2" stroke-linecap="round" stroke-linejoin="round"><path d="M6 2 3 6v14a2 2 0 0 0 2 2h14a2 2 0 0 0 2-2V6l-3-4Z"/><path d="M3 6h18"/><path d="M16 10a4 4 0 0 1-8 0"/></svg>
<div class="card" style="left:222px;top:809px;width:500px;height:300px"></div>
<div class="card" style="left:738px;top:809px;width:1160px;height:300px"></div>
<svg class="abs" style="left:1857px;top:840px" width="16" height="16" viewBox="0 0 24 24" fill="none" stroke="#0a0a0a" stroke-width="2" stroke-linecap="round" stroke-linejoin="round"><path d="M16 21v-2a4 4 0 0 0-4-4H6a4 4 0 0 0-4 4v2"/><circle cx="9" cy="7" r="4"/><path d="M22 21v-2a4 4 0 0 0-3-3.87"/><path d="M16 3.13a4 4 0 0 1 0 7.75"/></svg>
<span class="t" style="left:61.88px;top:82.00px;font-size:14.63px;line-height:14.63px;font-weight:400;color:#fff;letter-spacing:0.106px;-webkit-text-stroke:0.55px #fff">Início</span>
<span class="t" style="left:62.60px;top:124.00px;font-size:14.63px;line-height:14.63px;font-weight:400;color:#56565e;letter-spacing:0.072px">Atendimento</span>
<span class="t" style="left:62.60px;top:166.00px;font-size:14.63px;line-height:14.63px;font-weight:400;color:#56565e;letter-spacing:-0.662px">CRM</span>
<span class="t" style="left:62.60px;top:208.00px;font-size:14.63px;line-height:14.63px;font-weight:400;color:#56565e;letter-spacing:0.007px">Cadastros</span>
<span class="t" style="left:62.60px;top:250.00px;font-size:14.63px;line-height:14.63px;font-weight:400;color:#56565e;letter-spacing:0.126px">Tarefas</span>
<span class="t" style="left:62.60px;top:292.00px;font-size:14.63px;line-height:14.63px;font-weight:400;color:#56565e;letter-spacing:-0.106px">Campanhas</span>
<span class="t" style="left:61.60px;top:334.00px;font-size:14.63px;line-height:14.63px;font-weight:400;color:#56565e;letter-spacing:0.209px">Integrações</span>
<span class="t" style="left:62.60px;top:376.00px;font-size:14.63px;line-height:14.63px;font-weight:400;color:#56565e;letter-spacing:0.091px">Automações</span>
<span class="t" style="left:61.60px;top:418.00px;font-size:14.63px;line-height:14.63px;font-weight:400;color:#56565e;letter-spacing:0.008px">Relatórios</span>
<span class="t" style="left:62.60px;top:460.00px;font-size:14.63px;line-height:14.63px;font-weight:400;color:#56565e;letter-spacing:-0.152px">Assinatura</span>
<span class="t" style="left:62.60px;top:502.00px;font-size:14.63px;line-height:14.63px;font-weight:400;color:#56565e;letter-spacing:-0.215px">Chaves</span>
<span class="t" style="left:62.60px;top:544.00px;font-size:14.63px;line-height:14.63px;font-weight:400;color:#56565e;letter-spacing:-0.085px">Acesso</span>
<span class="t" style="left:62.60px;top:586.00px;font-size:14.63px;line-height:14.63px;font-weight:400;color:#56565e;letter-spacing:0.192px">Configurações</span>
<span class="t" style="left:62.60px;top:628.00px;font-size:14.63px;line-height:14.63px;font-weight:400;color:#56565e;letter-spacing:0.018px">Suporte</span>
<span class="t" style="left:24.50px;top:821.00px;font-size:12.54px;line-height:12.54px;font-weight:400;color:#0c0c10;letter-spacing:0.005px;-webkit-text-stroke:0.4px #0c0c10">Gabriel Bastos da Silva</span>
<span class="t" style="left:24.30px;top:837.00px;font-size:12.54px;line-height:12.54px;font-weight:400;color:#737378;letter-spacing:0.139px">Administrador</span>
<span class="t" style="left:105.58px;top:874.00px;font-size:12.54px;line-height:12.54px;font-weight:400;color:#0a0a0a;letter-spacing:-0.021px;-webkit-text-stroke:0.55px #0a0a0a">Sair</span>
<span class="t" style="left:318.07px;top:21.00px;font-size:16.72px;line-height:16.72px;font-weight:400;color:#1c55b4;letter-spacing:0.303px;-webkit-text-stroke:0.35px #1c55b4">Início</span>
<span class="t" style="left:283.90px;top:108.00px;font-size:20.8px;line-height:20.8px;font-weight:700;color:#fff;letter-spacing:0.222px">Bem vindo novamente!</span>
<span class="t" style="left:246.75px;top:142.00px;font-size:14.63px;line-height:14.63px;font-weight:400;color:#fff;letter-spacing:0.200px;-webkit-text-stroke:0.5px #fff">Aqui você encontrará informações relevantes do seu negócio, bem como atalhos para as principais funções do sistema</span>
<span class="t" style="left:246.97px;top:225.00px;font-size:20.9px;line-height:20.9px;font-weight:400;color:#0a0a0a;letter-spacing:0.494px;-webkit-text-stroke:0.75px #0a0a0a">Gráfico Interativo</span>
<span class="t" style="left:246.60px;top:256.00px;font-size:14.63px;line-height:14.63px;font-weight:400;color:#737378;letter-spacing:0.153px">Exibindo total de vendas por produto ao longo do tempo</span>
<span class="t" style="left:1725.80px;top:240.00px;font-size:16.72px;line-height:16.72px;font-weight:400;color:#0a0a0a;letter-spacing:0.265px">Últimos 3 meses</span>
<span class="t" style="left:247.78px;top:666.00px;font-size:20.9px;line-height:20.9px;font-weight:400;color:#0a0a0a;letter-spacing:0.433px;-webkit-text-stroke:0.75px #0a0a0a">Total Vendas</span>
<span class="t" style="left:247.40px;top:699.00px;font-size:14.63px;line-height:14.63px;font-weight:400;color:#737378;letter-spacing:0.122px">Total vendas em 90 dias</span>
<span class="t" style="left:246.60px;top:744.00px;font-size:19.26px;line-height:19.26px;font-weight:700;color:#0a0a0a;letter-spacing:0.697px">R$ 40.000</span>
<span class="t" style="left:669.98px;top:666.00px;font-size:20.9px;line-height:20.9px;font-weight:400;color:#0a0a0a;letter-spacing:0.362px;-webkit-text-stroke:0.75px #0a0a0a">Novos Clientes</span>
<span class="t" style="left:669.60px;top:699.00px;font-size:14.63px;line-height:14.63px;font-weight:400;color:#737378;letter-spacing:0.159px">Novos clientes em 30 dias</span>
<span class="t" style="left:670.60px;top:744.00px;font-size:19.26px;line-height:19.26px;font-weight:700;color:#0a0a0a;letter-spacing:0.744px">324</span>
<span class="t" style="left:1093.08px;top:666.00px;font-size:20.9px;line-height:20.9px;font-weight:400;color:#0a0a0a;letter-spacing:0.395px;-webkit-text-stroke:0.75px #0a0a0a">Negociações Hoje</span>
<span class="t" style="left:1093.60px;top:699.00px;font-size:14.63px;line-height:14.63px;font-weight:400;color:#737378;letter-spacing:0.119px">Total de negociações em andamento hoje</span>
<span class="t" style="left:1093.80px;top:744.00px;font-size:19.26px;line-height:19.26px;font-weight:700;color:#0a0a0a;letter-spacing:-0.006px">65</span>
<span class="t" style="left:1516.88px;top:666.00px;font-size:20.9px;line-height:20.9px;font-weight:400;color:#0a0a0a;letter-spacing:0.339px;-webkit-text-stroke:0.75px #0a0a0a">Total Pedidos</span>
<span class="t" style="left:1516.50px;top:699.00px;font-size:14.63px;line-height:14.63px;font-weight:400;color:#737378;letter-spacing:0.154px">Total de pedidos em 30 dias</span>
<span class="t" style="left:1516.60px;top:744.00px;font-size:19.26px;line-height:19.26px;font-weight:700;color:#0a0a0a;letter-spacing:0.608px">2.254</span>
<span class="t" style="left:246.88px;top:838.00px;font-size:20.9px;line-height:20.9px;font-weight:400;color:#0a0a0a;letter-spacing:0.263px;-webkit-text-stroke:0.75px #0a0a0a">Gráfico em Barras</span>
<span class="t" style="left:247.50px;top:871.00px;font-size:14.63px;line-height:14.63px;font-weight:400;color:#737378;letter-spacing:0.233px">Janeiro - Junho 2025</span>
<span class="t" style="left:763.17px;top:838.00px;font-size:20.9px;line-height:20.9px;font-weight:400;color:#0a0a0a;letter-spacing:0.495px;-webkit-text-stroke:0.75px #0a0a0a">Últimos clientes</span>
<span class="t" style="left:762.80px;top:871.00px;font-size:14.63px;line-height:14.63px;font-weight:400;color:#737378;letter-spacing:0.099px">Novos Clientes nas últimas 24 horas</span>
<span class="t" style="left:995.00px;top:577.00px;font-size:12.54px;line-height:12.54px;font-weight:400;color:#0a0a0a;letter-spacing:0.029px">Produto Y</span>
<span class="t" style="left:1081.60px;top:577.00px;font-size:12.54px;line-height:12.54px;font-weight:400;color:#0a0a0a;letter-spacing:-0.021px">Produto X</span>
<span class="t" style="left:335.03px;top:546.00px;font-size:12.54px;line-height:12.54px;font-weight:400;color:#737378;letter-spacing:0.139px">6 de abr.</span>
<span class="t" style="left:423.71px;top:546.00px;font-size:12.54px;line-height:12.54px;font-weight:400;color:#737378;letter-spacing:-0.303px">11 de abr.</span>
<span class="t" style="left:512.29px;top:546.00px;font-size:12.54px;line-height:12.54px;font-weight:400;color:#737378;letter-spacing:-0.140px">16 de abr.</span>
<span class="t" style="left:602.27px;top:546.00px;font-size:12.54px;line-height:12.54px;font-weight:400;color:#737378;letter-spacing:-0.184px">21 de abr.</span>
<span class="t" style="left:690.99px;top:546.00px;font-size:12.54px;line-height:12.54px;font-weight:400;color:#737378;letter-spacing:0.049px">26 de abr.</span>
<span class="t" style="left:784.17px;top:546.00px;font-size:12.54px;line-height:12.54px;font-weight:400;color:#737378;letter-spacing:-0.270px">1 de mai.</span>
<span class="t" style="left:872.80px;top:546.00px;font-size:12.54px;line-height:12.54px;font-weight:400;color:#737378;letter-spacing:0.017px">6 de mai.</span>
<span class="t" style="left:961.53px;top:546.00px;font-size:12.54px;line-height:12.54px;font-weight:400;color:#737378;letter-spacing:-0.422px">11 de mai.</span>
<span class="t" style="left:1049.91px;top:546.00px;font-size:12.54px;line-height:12.54px;font-weight:400;color:#737378;letter-spacing:-0.215px">16 de mai.</span>
<span class="t" style="left:1156.59px;top:546.00px;font-size:12.54px;line-height:12.54px;font-weight:400;color:#737378;letter-spacing:0.019px">22 de mai.</span>
<span class="t" style="left:1264.32px;top:546.00px;font-size:12.54px;line-height:12.54px;font-weight:400;color:#737378;letter-spacing:0.019px">28 de mai.</span>
<span class="t" style="left:1359.20px;top:546.00px;font-size:12.54px;line-height:12.54px;font-weight:400;color:#737378;letter-spacing:0.051px">2 de jun.</span>
<span class="t" style="left:1448.83px;top:546.00px;font-size:12.54px;line-height:12.54px;font-weight:400;color:#737378;letter-spacing:0.088px">7 de jun.</span>
<span class="t" style="left:1536.31px;top:546.00px;font-size:12.54px;line-height:12.54px;font-weight:400;color:#737378;letter-spacing:-0.185px">12 de jun.</span>
<span class="t" style="left:1625.93px;top:546.00px;font-size:12.54px;line-height:12.54px;font-weight:400;color:#737378;letter-spacing:-0.151px">17 de jun.</span>
<span class="t" style="left:1714.41px;top:546.00px;font-size:12.54px;line-height:12.54px;font-weight:400;color:#737378;letter-spacing:0.137px">22 de jun.</span>
<span class="t" style="left:1816.70px;top:546.00px;font-size:12.54px;line-height:12.54px;font-weight:400;color:#737378;letter-spacing:0.171px">29 de jun.</span>
<div class="abs" style="left:1914px;top:2px;width:6px;height:647px;border-radius:3px;background:#5a5c5c"></div>
</body></html>
